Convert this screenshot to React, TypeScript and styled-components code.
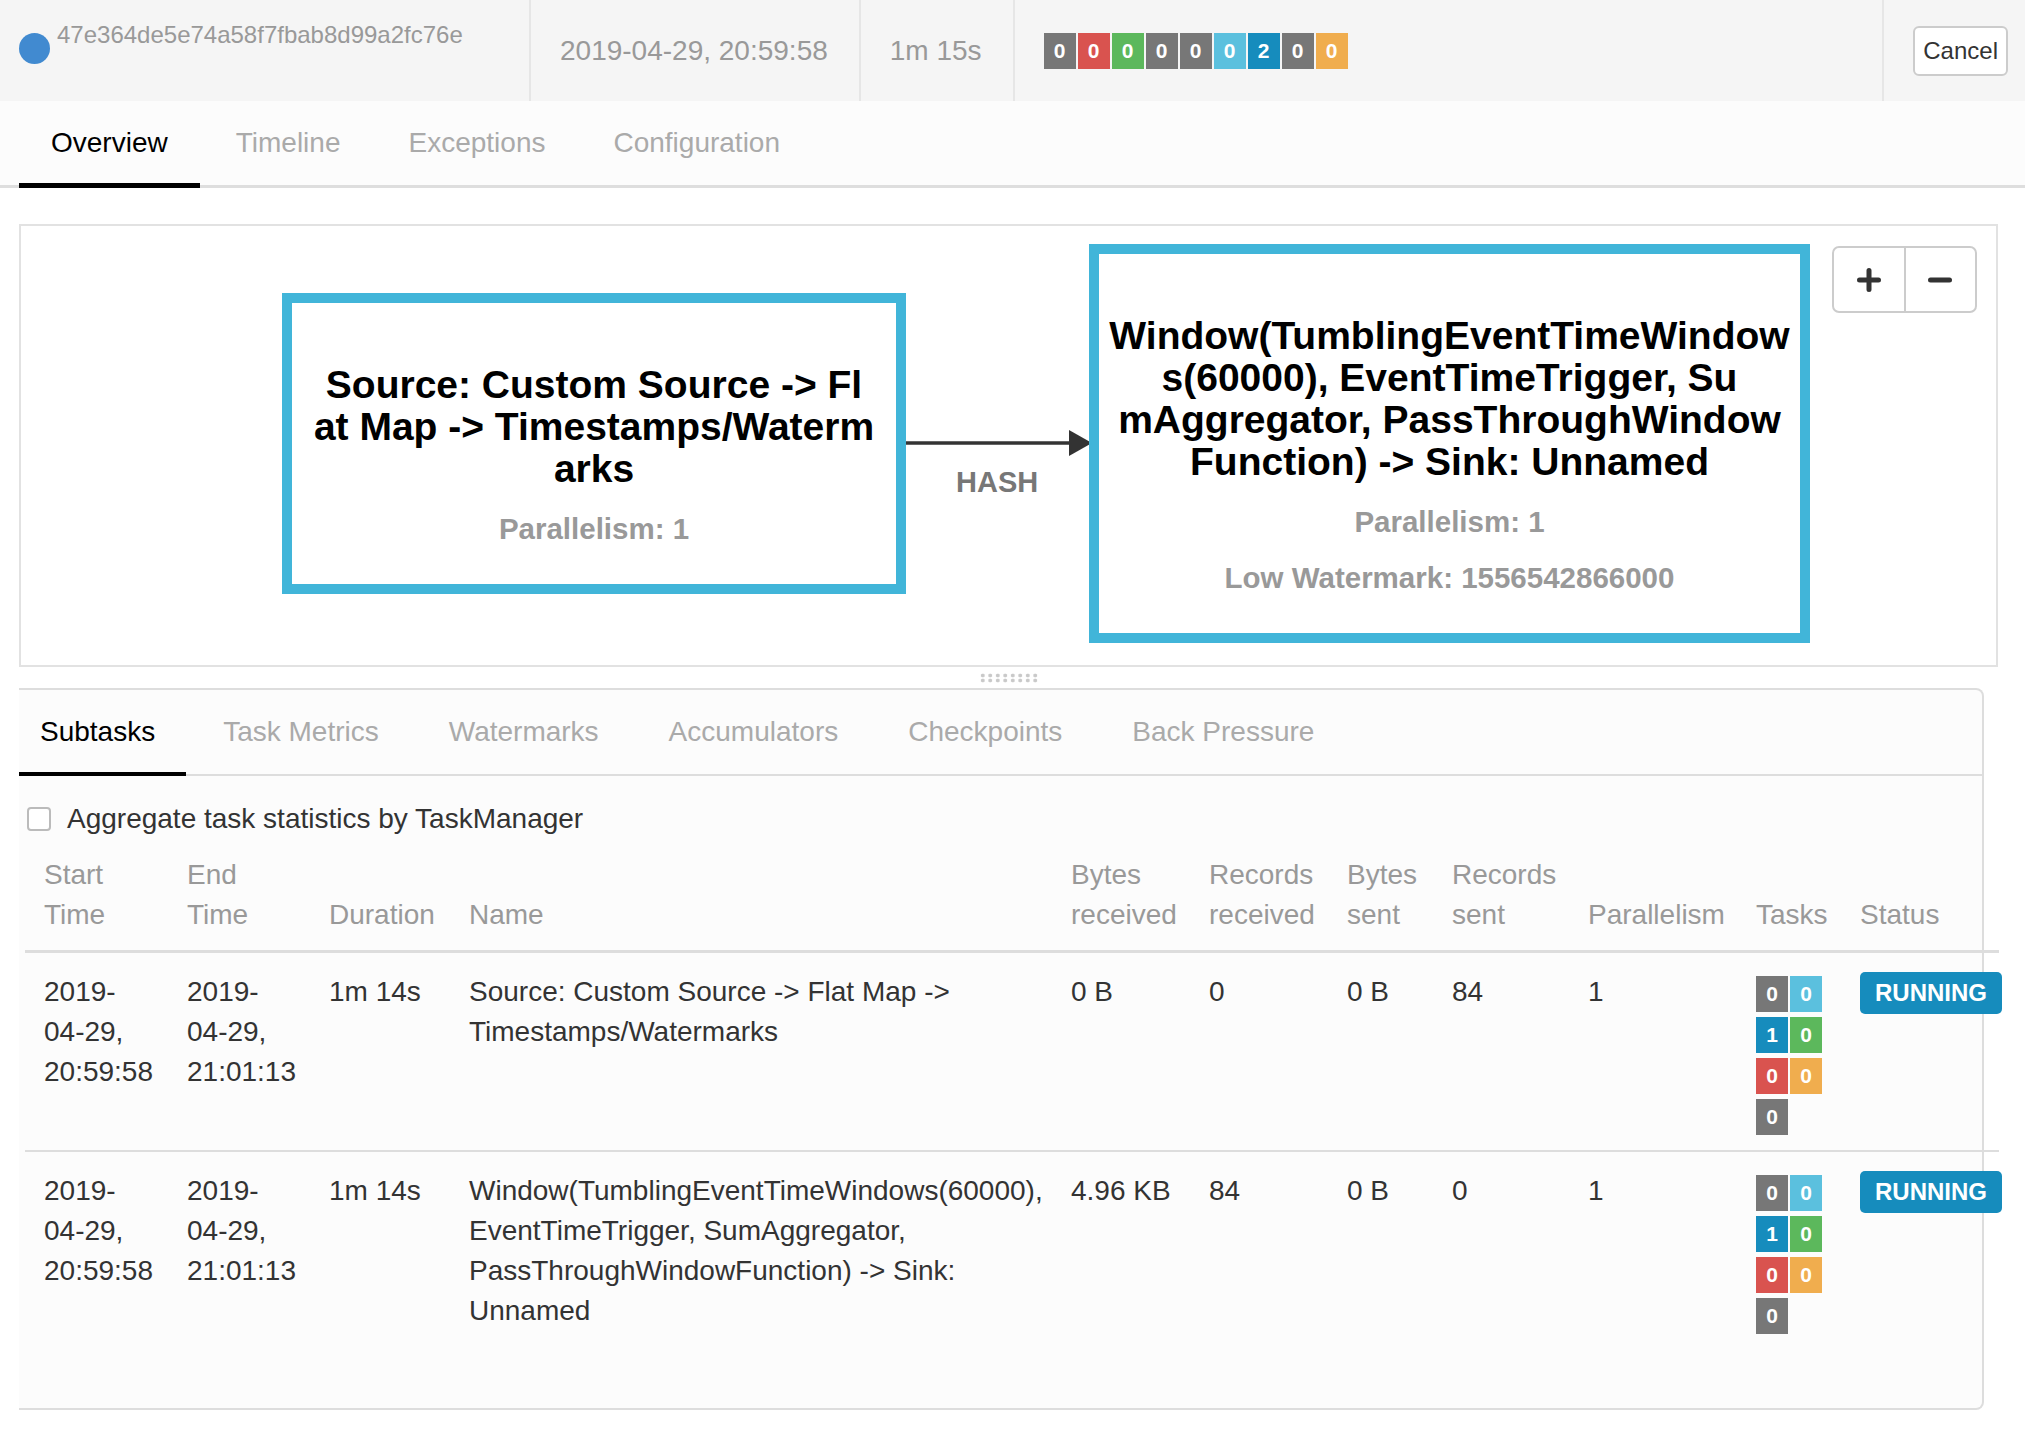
import styled, { createGlobalStyle } from "styled-components";

type Tone = "gray" | "red" | "green" | "sky" | "blue" | "orange";

const toneColor: Record<Tone, string> = {
  gray: "#777777",
  red: "#d9534f",
  green: "#5cb85c",
  sky: "#5bc0de",
  blue: "#168cbd",
  orange: "#f0ad4e",
};

type Count = { tone: Tone; value: number };

const jobCounts: Count[] = [
  { tone: "gray", value: 0 },
  { tone: "red", value: 0 },
  { tone: "green", value: 0 },
  { tone: "gray", value: 0 },
  { tone: "gray", value: 0 },
  { tone: "sky", value: 0 },
  { tone: "blue", value: 2 },
  { tone: "gray", value: 0 },
  { tone: "orange", value: 0 },
];

const taskCounts: Count[] = [
  { tone: "gray", value: 0 },
  { tone: "sky", value: 0 },
  { tone: "blue", value: 1 },
  { tone: "green", value: 0 },
  { tone: "red", value: 0 },
  { tone: "orange", value: 0 },
  { tone: "gray", value: 0 },
];

type Vertex = {
  start: string[];
  end: string[];
  duration: string;
  name: string[];
  bytesIn: string;
  recordsIn: string;
  bytesOut: string;
  recordsOut: string;
  parallelism: number;
};

const vertices: Vertex[] = [
  {
    start: ["2019-", "04-29,", "20:59:58"],
    end: ["2019-", "04-29,", "21:01:13"],
    duration: "1m 14s",
    name: ["Source: Custom Source -> Flat Map ->", "Timestamps/Watermarks"],
    bytesIn: "0 B",
    recordsIn: "0",
    bytesOut: "0 B",
    recordsOut: "84",
    parallelism: 1,
  },
  {
    start: ["2019-", "04-29,", "20:59:58"],
    end: ["2019-", "04-29,", "21:01:13"],
    duration: "1m 14s",
    name: [
      "Window(TumblingEventTimeWindows(60000),",
      "EventTimeTrigger, SumAggregator,",
      "PassThroughWindowFunction) -> Sink:",
      "Unnamed",
    ],
    bytesIn: "4.96 KB",
    recordsIn: "84",
    bytesOut: "0 B",
    recordsOut: "0",
    parallelism: 1,
  },
];

const headColumns: string[][] = [
  ["Start", "Time"],
  ["End", "Time"],
  ["Duration"],
  ["Name"],
  ["Bytes", "received"],
  ["Records", "received"],
  ["Bytes", "sent"],
  ["Records", "sent"],
  ["Parallelism"],
  ["Tasks"],
  ["Status"],
];

const mainTabs = ["Overview", "Timeline", "Exceptions", "Configuration"];
const subTabs = [
  "Subtasks",
  "Task Metrics",
  "Watermarks",
  "Accumulators",
  "Checkpoints",
  "Back Pressure",
];

function Lines({ lines }: { lines: string[] }) {
  return (
    <div>
      {lines.map((l, i) => (
        <Line key={i}>{l}</Line>
      ))}
    </div>
  );
}

export default function App() {
  return (
    <>
      <GlobalStyle />
      <Header>
        <JobCell>
          <StatusDot />
          <JobId>47e364de5e74a58f7fbab8d99a2fc76e</JobId>
        </JobCell>
        <HeaderCell>
          <HeaderText>2019-04-29, 20:59:58</HeaderText>
        </HeaderCell>
        <HeaderCell>
          <HeaderText>1m 15s</HeaderText>
        </HeaderCell>
        <HeaderCell $grow>
          <BadgeRow>
            {jobCounts.map((c, i) => (
              <CountBadge key={i} $tone={c.tone}>
                {c.value}
              </CountBadge>
            ))}
          </BadgeRow>
        </HeaderCell>
        <ActionCell>
          <CancelButton>Cancel</CancelButton>
        </ActionCell>
      </Header>

      <MainTabs>
        {mainTabs.map((t, i) => (
          <MainTab key={t} $active={i === 0}>
            {t}
          </MainTab>
        ))}
      </MainTabs>

      <Content>
        <GraphPanel>
          <Node $left={261} $top={67} $width={624} $height={301}>
            <NodeTitle>
              <Lines
                lines={[
                  "Source: Custom Source -> Fl",
                  "at Map -> Timestamps/Waterm",
                  "arks",
                ]}
              />
            </NodeTitle>
            <NodeMeta>Parallelism: 1</NodeMeta>
          </Node>

          <Edge width="186" height="30" viewBox="0 0 186 30">
            <line x1="0" y1="15" x2="166" y2="15" stroke="#333" strokeWidth="3.5" />
            <polygon points="163,2 186,15 163,28" fill="#333" />
          </Edge>
          <EdgeLabel>HASH</EdgeLabel>

          <Node $left={1068} $top={18} $width={721} $height={399}>
            <NodeTitle>
              <Lines
                lines={[
                  "Window(TumblingEventTimeWindow",
                  "s(60000), EventTimeTrigger, Su",
                  "mAggregator, PassThroughWindow",
                  "Function) -> Sink: Unnamed",
                ]}
              />
            </NodeTitle>
            <NodeMeta>Parallelism: 1</NodeMeta>
            <NodeMeta>Low Watermark: 1556542866000</NodeMeta>
          </Node>

          <ZoomGroup>
            <ZoomButton aria-label="zoom in">
              <svg width="24" height="24" viewBox="0 0 24 24">
                <path
                  d="M12 2.5v19M2.5 12h19"
                  stroke="#333"
                  strokeWidth="5"
                  strokeLinecap="round"
                />
              </svg>
            </ZoomButton>
            <ZoomButton aria-label="zoom out">
              <svg width="24" height="24" viewBox="0 0 24 24">
                <path d="M2.5 12h19" stroke="#333" strokeWidth="5" strokeLinecap="round" />
              </svg>
            </ZoomButton>
          </ZoomGroup>
        </GraphPanel>

        <ResizeBar>
          <Grip />
        </ResizeBar>

        <DetailPanel>
          <SubTabs>
            {subTabs.map((t, i) => (
              <SubTab key={t} $active={i === 0}>
                {t}
              </SubTab>
            ))}
          </SubTabs>

          <CheckRow>
            <CheckBox />
            Aggregate task statistics by TaskManager
          </CheckRow>

          <Table>
            <HeadRow>
              {headColumns.map((h, i) => (
                <Lines key={i} lines={h} />
              ))}
            </HeadRow>

            {vertices.map((v, i) => (
              <BodyRow key={i}>
                <Lines lines={v.start} />
                <Lines lines={v.end} />
                <div>{v.duration}</div>
                <Lines lines={v.name} />
                <div>{v.bytesIn}</div>
                <div>{v.recordsIn}</div>
                <div>{v.bytesOut}</div>
                <div>{v.recordsOut}</div>
                <div>{v.parallelism}</div>
                <TaskGrid>
                  {taskCounts.map((c, j) => (
                    <CountBadge key={j} $tone={c.tone}>
                      {c.value}
                    </CountBadge>
                  ))}
                </TaskGrid>
                <div>
                  <RunningTag>RUNNING</RunningTag>
                </div>
              </BodyRow>
            ))}
          </Table>
        </DetailPanel>
      </Content>
    </>
  );
}

const GlobalStyle = createGlobalStyle`
  html, body {
    margin: 0;
    padding: 0;
    background: #fff;
  }
  body {
    font-family: "Liberation Sans", Helvetica, Arial, sans-serif;
    color: #333;
  }
  * {
    box-sizing: border-box;
  }
`;

const Line = styled.span`
  display: block;
  white-space: nowrap;
`;

const Header = styled.header`
  display: flex;
  height: 101px;
  background: #f5f5f5;
`;

const HeaderCell = styled.div<{ $grow?: boolean }>`
  display: flex;
  align-items: center;
  flex: ${(p) => (p.$grow ? "1" : "none")};
  padding: 0 31px 0 29px;
  border-right: 2px solid #e6e6e6;
`;

const JobCell = styled(HeaderCell)`
  width: 531px;
  align-items: flex-start;
  padding: 21px 0 0 19px;
`;

const ActionCell = styled(HeaderCell)`
  padding: 0 17px 0 29px;
  border-right: none;
`;

const StatusDot = styled.span`
  width: 31px;
  height: 31px;
  margin-top: 12px;
  border-radius: 50%;
  background: #418ad0;
  flex: none;
`;

const JobId = styled.span`
  margin-left: 7px;
  font-size: 24px;
  line-height: 27px;
  color: #999;
`;

const HeaderText = styled.span`
  font-size: 28px;
  color: #999;
  white-space: nowrap;
`;

const BadgeRow = styled.div`
  display: flex;
  gap: 2px;
`;

const CountBadge = styled.span<{ $tone: Tone }>`
  display: block;
  width: 32px;
  height: 36px;
  background: ${(p) => toneColor[p.$tone]};
  color: #fff;
  font-size: 21px;
  font-weight: bold;
  line-height: 36px;
  text-align: center;
`;

const CancelButton = styled.button`
  height: 50px;
  padding: 0 8px;
  border: 2px solid #ccc;
  border-radius: 6px;
  background: #fff;
  color: #333;
  font-family: inherit;
  font-size: 24px;
`;

const MainTabs = styled.nav`
  display: flex;
  height: 87px;
  padding-left: 19px;
  background: #fcfcfc;
  border-bottom: 3px solid #dedede;
`;

const MainTab = styled.div<{ $active?: boolean }>`
  position: relative;
  display: flex;
  align-items: center;
  margin-right: 4px;
  padding: 0 32px;
  font-size: 28px;
  color: ${(p) => (p.$active ? "#000" : "#aaa")};

  &::after {
    content: "";
    display: ${(p) => (p.$active ? "block" : "none")};
    position: absolute;
    left: 0;
    right: 0;
    bottom: -3px;
    height: 5px;
    background: #000;
  }
`;

const Content = styled.main`
  padding: 36px 27px 0 19px;
`;

const GraphPanel = styled.section`
  position: relative;
  height: 443px;
  border: 2px solid #e2e2e2;
  background: #fff;
`;

const Node = styled.div<{
  $left: number;
  $top: number;
  $width: number;
  $height: number;
}>`
  position: absolute;
  left: ${(p) => p.$left}px;
  top: ${(p) => p.$top}px;
  width: ${(p) => p.$width}px;
  height: ${(p) => p.$height}px;
  display: flex;
  flex-direction: column;
  align-items: center;
  padding-top: 61px;
  border: 10px solid #41b5d9;
  background: #fff;
  text-align: center;
`;

const NodeTitle = styled.div`
  font-size: 39px;
  font-weight: bold;
  line-height: 42px;
  color: #000;
`;

const NodeMeta = styled.div`
  margin-top: 22px;
  font-size: 29.5px;
  font-weight: bold;
  line-height: 34px;
  color: #999;
  white-space: nowrap;
`;

const Edge = styled.svg`
  position: absolute;
  left: 885px;
  top: 202px;
`;

const EdgeLabel = styled.div`
  position: absolute;
  left: 935px;
  top: 239px;
  font-size: 29px;
  font-weight: bold;
  line-height: 34px;
  color: #777;
`;

const ZoomGroup = styled.div`
  position: absolute;
  left: 1811px;
  top: 20px;
  display: flex;
  width: 145px;
  height: 67px;
  border: 2px solid #ccc;
  border-radius: 7px;
  background: #fff;
`;

const ZoomButton = styled.div`
  flex: 1;
  display: flex;
  align-items: center;
  justify-content: center;

  & + & {
    border-left: 2px solid #ccc;
  }
`;

const ResizeBar = styled.div`
  display: flex;
  align-items: center;
  justify-content: center;
  height: 21px;
`;

const Grip = styled.div`
  width: 60px;
  height: 10px;
  background-image: radial-gradient(circle, #c9c9c9 1.6px, transparent 2.2px);
  background-size: 7.5px 5px;
`;

const DetailPanel = styled.section`
  min-height: 722px;
  margin-right: 14px;
  border: 2px solid #dddddd;
  border-left: none;
  border-radius: 0 8px 8px 0;
  background: #fcfcfc;
`;

const SubTabs = styled.nav`
  display: flex;
  height: 86px;
  border-bottom: 2px solid #dddddd;
`;

const SubTab = styled.div<{ $active?: boolean }>`
  position: relative;
  display: flex;
  align-items: center;
  margin-left: 4px;
  padding: 0 33px;
  font-size: 28px;
  color: ${(p) => (p.$active ? "#000" : "#aaa")};

  &:first-child {
    margin-left: 0;
    padding: 0 31px 0 21px;
  }

  &::after {
    content: "";
    display: ${(p) => (p.$active ? "block" : "none")};
    position: absolute;
    left: 0;
    right: 0;
    bottom: -2px;
    height: 4px;
    background: #000;
  }
`;

const CheckRow = styled.label`
  display: flex;
  align-items: center;
  height: 60px;
  padding: 26px 0 0 8px;
  font-size: 28px;
  line-height: 34px;
  color: #333;
`;

const CheckBox = styled.span`
  width: 24px;
  height: 24px;
  margin-right: 16px;
  border: 2px solid #bbb;
  border-radius: 4px;
  background: #fff;
`;

const Table = styled.div`
  width: 1974px;
  margin: 19px 0 0 6px;
  font-size: 28px;
  line-height: 40px;
`;

const columns = "143px 142px 140px 602px 138px 138px 105px 136px 168px 104px 1fr";

const HeadRow = styled.div`
  display: grid;
  grid-template-columns: ${columns};
  align-items: end;
  padding: 0 0 15px 19px;
  border-bottom: 3px solid #dddddd;
  color: #999;
`;

const BodyRow = styled.div`
  display: grid;
  grid-template-columns: ${columns};
  align-items: start;
  padding: 19px 0 15px 19px;
  border-bottom: 2px solid #dddddd;
  color: #333;

  &:last-child {
    border-bottom: none;
  }
`;

const TaskGrid = styled.div`
  display: grid;
  grid-template-columns: 32px 32px;
  gap: 5px 2px;
  margin-top: 4px;
`;

const RunningTag = styled.span`
  display: inline-block;
  height: 42px;
  padding: 0 15px;
  border-radius: 5px;
  background: #168cbd;
  color: #fff;
  font-size: 24px;
  font-weight: bold;
  line-height: 42px;
`;
